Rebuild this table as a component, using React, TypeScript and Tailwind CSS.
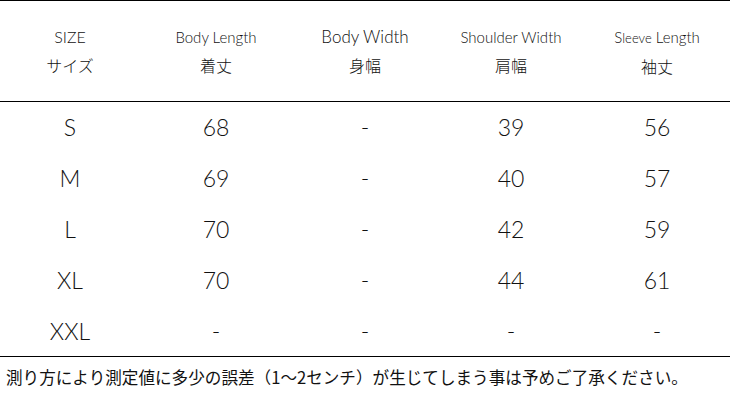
import React from "react";

const latin = "font-['Lato','Noto_Sans_CJK_JP',sans-serif] font-light";
const jp = "font-['Noto_Sans_CJK_JP',sans-serif]";
const jpHead = "font-['Noto_Sans_CJK_JP',sans-serif] font-light text-[16px] leading-[28px]";

const rows = [
  ["S", "68", "-", "39", "56"],
  ["M", "69", "-", "40", "57"],
  ["L", "70", "-", "42", "59"],
  ["XL", "70", "-", "44", "61"],
  ["XXL", "-", "-", "-", "-"],
];

export default function App() {
  return (
    <div className="w-[730px] h-[400px] bg-white text-[#111] overflow-hidden">
      <div className="border-t border-black" />
      <div className="grid grid-cols-5 h-[101px] items-center border-b border-black">
        <div className="flex flex-col items-center pr-[6px]">
          <div className={`${latin} text-[16px] leading-[28px]`}>SIZE</div>
          <div className={jpHead}>サイズ</div>
        </div>
        <div className="flex flex-col items-center pr-[6px]">
          <div className={`${latin} text-[15px] leading-[28px]`}>Body Length</div>
          <div className={jpHead}>着丈</div>
        </div>
        <div className="flex flex-col items-center">
          <div className={`${latin} text-[17px] leading-[28px]`}>Body Width</div>
          <div className={jpHead}>身幅</div>
        </div>
        <div className="flex flex-col items-center">
          <div className={`${latin} text-[15px] leading-[28px]`}>Shoulder Width</div>
          <div className={jpHead}>肩幅</div>
        </div>
        <div className="flex flex-col items-center">
          <div className={`${latin} text-[15px] leading-[28px]`}>
            S<span className="text-[13px]">leeve</span> Length
          </div>
          <div className={jpHead}>袖丈</div>
        </div>
      </div>
      <div className="border-b border-black">
        {rows.map((r, i) => (
          <div key={i} className={`grid grid-cols-5 items-center ${i === 4 ? "h-[50px]" : "h-[51px]"}`}>
            {r.map((c, j) => (
              <div
                key={j}
                className={`${latin} text-center text-[23px] leading-none ${j < 2 ? "pr-[6px]" : ""}`}
              >
                {c}
              </div>
            ))}
          </div>
        ))}
      </div>
      <div className={`${jp} text-[16.6px] leading-[40px] pl-[6px] whitespace-nowrap`}>
        測り方により測定値に多少の誤差（1〜2センチ）が生じてしまう事は予めご了承ください。
      </div>
    </div>
  );
}
